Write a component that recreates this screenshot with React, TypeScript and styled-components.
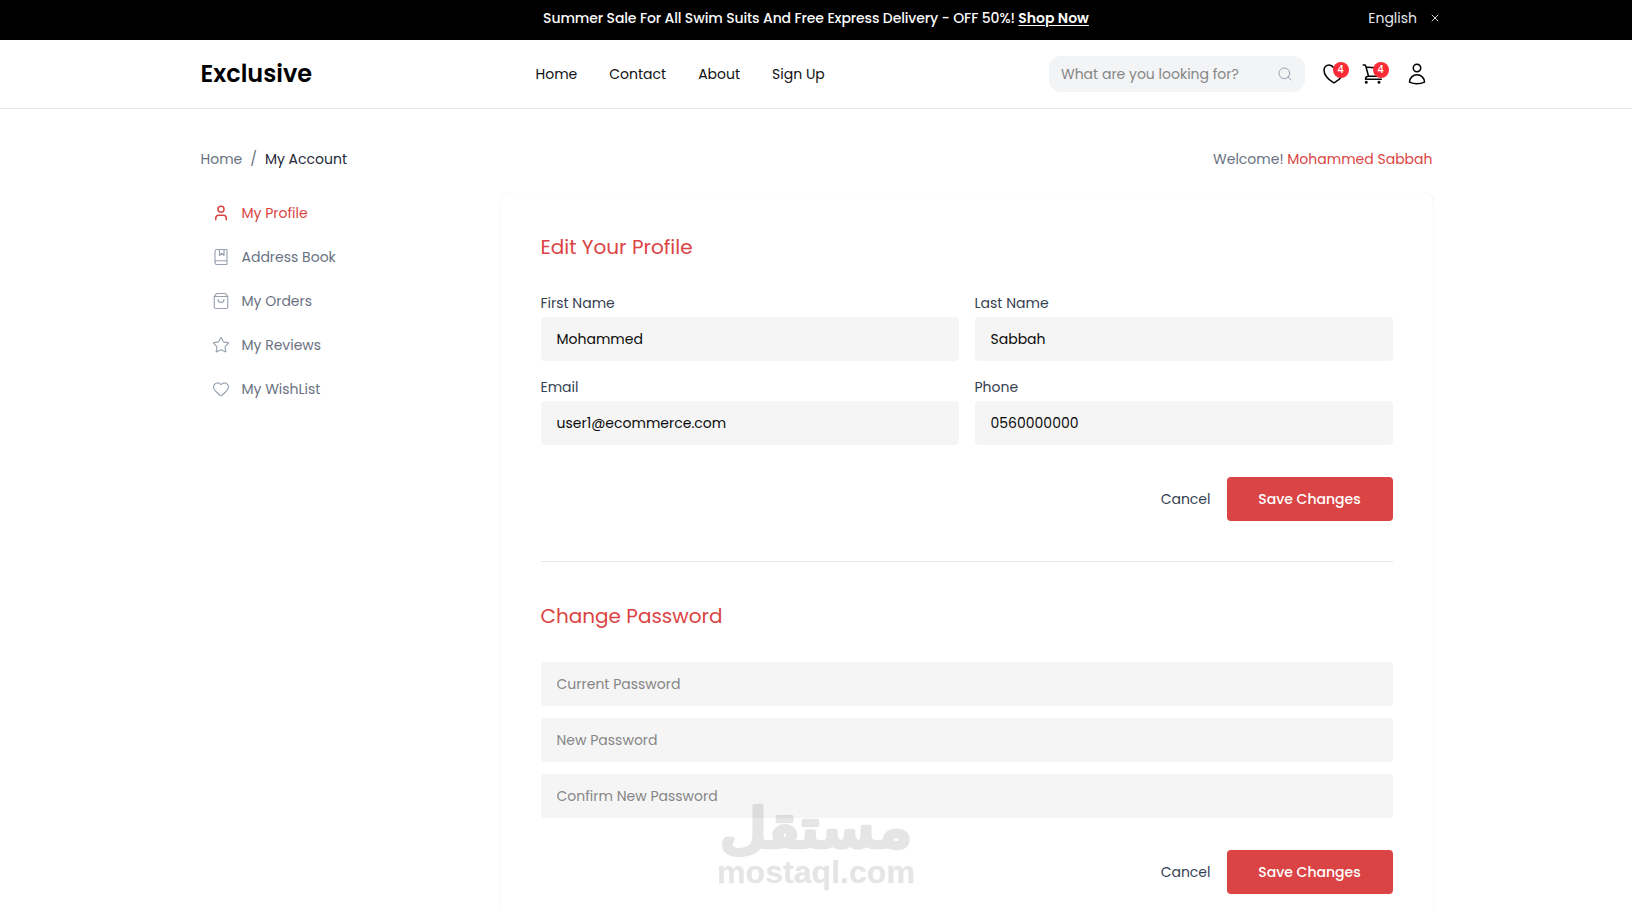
import React from 'react';
import styled, { createGlobalStyle } from 'styled-components';
import { BookMarked, Heart, Search, ShoppingBag, Star, User, X } from 'lucide-react';

const GlobalStyle = createGlobalStyle`
  *, *::before, *::after { box-sizing: border-box; }
  body {
    margin: 0;
    background: #fff;
    color: #101828;
    font: 400 14px/20px Poppins, Inter, sans-serif;
  }
  #root { height: 100vh; overflow: hidden; }
  a { color: inherit; text-decoration: none; }
  h1, h2, p, ul { margin: 0; padding: 0; list-style: none; }
  button, input { font: inherit; border: 0; }
`;

const Banner = styled.div`
  display: grid;
  grid-template-columns: 1fr auto 1fr;
  align-items: center;
  height: 40px;
  padding: 0 191px 4px;
  background: #000;
  color: #fafafa;
`;

const Offer = styled.p`
  grid-column: 2;
  font-weight: 500;
  letter-spacing: -0.12px;
  white-space: nowrap;
`;

const ShopLink = styled.a`
  font-weight: 600;
  letter-spacing: 0;
  text-decoration: underline;
  text-underline-offset: 2px;
`;

const BannerTools = styled.div`
  display: flex;
  justify-self: end;
  align-items: center;
  gap: 12px;
  color: #e5e7eb;
`;

const CloseButton = styled.button`
  display: flex;
  padding: 0;
  background: none;
  color: #d1d5dc;
`;

const Header = styled.header`
  display: grid;
  grid-template-columns: 335px 513.5px auto 1fr;
  align-items: center;
  height: 69px;
  padding: 0 200px 0 200.5px;
  border-bottom: 1px solid #e5e7eb;
`;

const Logo = styled.h1`
  font-size: 24px;
  line-height: 32px;
  font-weight: 600;
  color: #000;
`;

const Nav = styled.nav`
  display: flex;
  gap: 32px;
  color: #111;
`;

const SearchBox = styled.label`
  display: flex;
  align-items: center;
  width: 256px;
  height: 36px;
  padding: 0 12px;
  border-radius: 12px;
  background: #f3f4f6;
  color: #99a1af;
`;

const SearchInput = styled.input`
  flex: 1;
  min-width: 0;
  padding: 0;
  background: none;
  outline: none;
  &::placeholder { color: #868686; opacity: 1; }
`;

const HeaderActions = styled.div`
  display: flex;
  align-items: center;
  padding-left: 13px;
  color: #000;
`;

const ActionLink = styled.a<{ $gap?: number }>`
  position: relative;
  display: flex;
  margin-left: ${(p) => p.$gap ?? 0}px;
`;

const Badge = styled.span<{ $right: number; $top: number }>`
  position: absolute;
  top: ${(p) => p.$top}px;
  right: ${(p) => p.$right}px;
  width: 16px;
  height: 16px;
  border-radius: 50%;
  background: #fb2c36;
  color: #fff;
  font-size: 10px;
  line-height: 16px;
  font-weight: 500;
  text-align: center;
`;

const Crumbs = styled.div`
  display: flex;
  justify-content: space-between;
  width: 1232px;
  margin: 40px 0 24px 200.5px;
  color: #6a7282;
`;

const Trail = styled.div`
  display: flex;
  gap: 8px;
`;

const Current = styled.span`
  color: #1e2939;
`;

const UserName = styled.span`
  color: #db4444;
`;

const Main = styled.main`
  display: flex;
  justify-content: space-between;
  width: 1232px;
  margin-left: 200.5px;
`;

const Menu = styled.ul`
  display: flex;
  flex-direction: column;
  gap: 4px;
`;

const MenuItem = styled.li<{ $active?: boolean }>`
  display: flex;
  align-items: center;
  gap: 11.5px;
  height: 40px;
  padding: 0 11.5px;
  color: ${(p) => (p.$active ? '#db4444' : '#6a7282')};
  svg { color: ${(p) => (p.$active ? '#db4444' : '#99a1af')}; }
`;

const Card = styled.section`
  width: 932px;
  height: 760px;
  padding: 40px;
  border-radius: 8px;
  background: #fff;
  box-shadow: 0 1px 2px rgba(0, 0, 0, 0.08), 0 0 1px rgba(0, 0, 0, 0.1);
`;

const Title = styled.h2`
  margin-bottom: 32px;
  color: #db4444;
  font-size: 20px;
  line-height: 28px;
  font-weight: 400;
`;

const FieldGrid = styled.div`
  display: grid;
  grid-template-columns: 1fr 1fr;
  gap: 16px;
`;

const FieldStack = styled.div`
  display: grid;
  gap: 12px;
`;

const Field = styled.label`
  display: flex;
  flex-direction: column;
  gap: 4px;
  color: #364153;
`;

const Input = styled.input`
  width: 100%;
  height: 44px;
  padding: 0 16px;
  border-radius: 4px;
  background: #f5f5f5;
  color: #0a0a0a;
  &::placeholder { color: #868686; opacity: 1; }
`;

const Buttons = styled.div`
  display: flex;
  justify-content: flex-end;
  align-items: center;
  gap: 16px;
  margin-top: 32px;
`;

const CancelButton = styled.button`
  padding: 0;
  background: none;
  color: #364153;
`;

const SaveButton = styled.button`
  width: 166px;
  height: 44px;
  padding: 0;
  border-radius: 4px;
  background: #db4444;
  color: #fff;
  font-weight: 500;
`;

const Divider = styled.div`
  height: 1px;
  margin: 40px 0;
  background: #e5e7eb;
`;

const Watermark = styled.svg`
  position: fixed;
  left: 706px;
  top: 790px;
  opacity: 0.1;
  pointer-events: none;
`;

const HeartOutline = () => (
  <svg width="32" height="32" viewBox="0 0 32 32" fill="none" stroke="currentColor" strokeWidth="1.5" strokeLinecap="round" strokeLinejoin="round">
    <path d="M11 7c-2.761 0-5 2.216-5 4.95 0 2.207.875 7.445 9.488 12.74a.985.985 0 0 0 1.024 0C25.125 19.395 26 14.157 26 11.95 26 9.216 23.761 7 21 7s-5 3-5 3-2.239-3-5-3Z" />
  </svg>
);

const CartOutline = () => (
  <svg width="24" height="24" viewBox="0 0 24 24" fill="none" stroke="currentColor" strokeWidth="1.5" strokeLinecap="round" strokeLinejoin="round">
    <path d="M2.25 3h1.386c.51 0 .955.343 1.087.835l.383 1.437M7.5 14.25a3 3 0 0 0-3 3h15.75m-12.75-3h11.218c1.121-2.3 2.1-4.684 2.924-7.138a60.114 60.114 0 0 0-16.536-1.84M7.5 14.25 5.106 5.272M6 20.25a.75.75 0 1 1-1.5 0 .75.75 0 0 1 1.5 0Zm12.75 0a.75.75 0 1 1-1.5 0 .75.75 0 0 1 1.5 0Z" />
  </svg>
);

const PersonOutline = () => (
  <svg width="24" height="24" viewBox="0 0 24 24" fill="none" stroke="currentColor" strokeWidth="1.5" strokeLinecap="round" strokeLinejoin="round">
    <path d="M15.75 6a3.75 3.75 0 1 1-7.5 0 3.75 3.75 0 0 1 7.5 0ZM4.501 20.118a7.5 7.5 0 0 1 14.998 0A17.933 17.933 0 0 1 12 21.75c-2.676 0-5.216-.584-7.499-1.632Z" />
  </svg>
);

const navLinks = ['Home', 'Contact', 'About', 'Sign Up'];

const menu = [
  { text: 'My Profile', Icon: User, active: true },
  { text: 'Address Book', Icon: BookMarked },
  { text: 'My Orders', Icon: ShoppingBag },
  { text: 'My Reviews', Icon: Star },
  { text: 'My WishList', Icon: Heart },
];

const profile = [
  { label: 'First Name', value: 'Mohammed' },
  { label: 'Last Name', value: 'Sabbah' },
  { label: 'Email', value: 'user1@ecommerce.com' },
  { label: 'Phone', value: '0560000000' },
];

const passwords = ['Current Password', 'New Password', 'Confirm New Password'];

const FormActions = () => (
  <Buttons>
    <CancelButton type="button">Cancel</CancelButton>
    <SaveButton type="button">Save Changes</SaveButton>
  </Buttons>
);

export default function App() {
  return (
    <>
      <GlobalStyle />
      <Banner>
        <Offer>
          Summer Sale For All Swim Suits And Free Express Delivery - OFF 50%! <ShopLink href="#">Shop Now</ShopLink>
        </Offer>
        <BannerTools>
          <span>English</span>
          <CloseButton aria-label="Close"><X size={12} strokeWidth={2} /></CloseButton>
        </BannerTools>
      </Banner>
      <Header>
        <Logo>Exclusive</Logo>
        <Nav>
          {navLinks.map((text) => (
            <a href="#" key={text}>{text}</a>
          ))}
        </Nav>
        <SearchBox>
          <SearchInput placeholder="What are you looking for?" />
          <Search size={16} strokeWidth={1.5} />
        </SearchBox>
        <HeaderActions>
          <ActionLink href="#"><HeartOutline /><Badge $top={4} $right={1.5}>4</Badge></ActionLink>
          <ActionLink href="#" $gap={10.5}><CartOutline /><Badge $top={0} $right={-4}>4</Badge></ActionLink>
          <ActionLink href="#" $gap={20}><PersonOutline /></ActionLink>
        </HeaderActions>
      </Header>
      <Crumbs>
        <Trail>
          <span>Home</span>
          <span>/</span>
          <Current>My Account</Current>
        </Trail>
        <p>Welcome! <UserName>Mohammed Sabbah</UserName></p>
      </Crumbs>
      <Main>
        <Menu>
          {menu.map(({ text, Icon, active }) => (
            <MenuItem key={text} $active={active}>
              <Icon size={18} strokeWidth={active ? 2 : 1.5} />
              <span>{text}</span>
            </MenuItem>
          ))}
        </Menu>
        <Card>
          <Title>Edit Your Profile</Title>
          <FieldGrid>
            {profile.map((f) => (
              <Field key={f.label}>
                <span>{f.label}</span>
                <Input defaultValue={f.value} />
              </Field>
            ))}
          </FieldGrid>
          <FormActions />
          <Divider />
          <Title>Change Password</Title>
          <FieldStack>
            {passwords.map((text) => (
              <Input key={text} placeholder={text} />
            ))}
          </FieldStack>
          <FormActions />
        </Card>
      </Main>
      <Watermark width="220" height="112" viewBox="0 0 220 112" fill="#000" stroke="#000" strokeLinejoin="round" strokeLinecap="round">
        <text x="110" y="57" textAnchor="middle" direction="rtl" fontFamily="DejaVu Sans" fontWeight="400" fontSize="54" strokeWidth="4.5" textLength="192" lengthAdjust="spacingAndGlyphs">مستقل</text>
        <text x="110" y="92.7" textAnchor="middle" fontFamily="Liberation Sans" fontWeight="700" fontSize="32" strokeWidth="0.4" textLength="198" lengthAdjust="spacingAndGlyphs">mostaql.com</text>
      </Watermark>
    </>
  );
}
